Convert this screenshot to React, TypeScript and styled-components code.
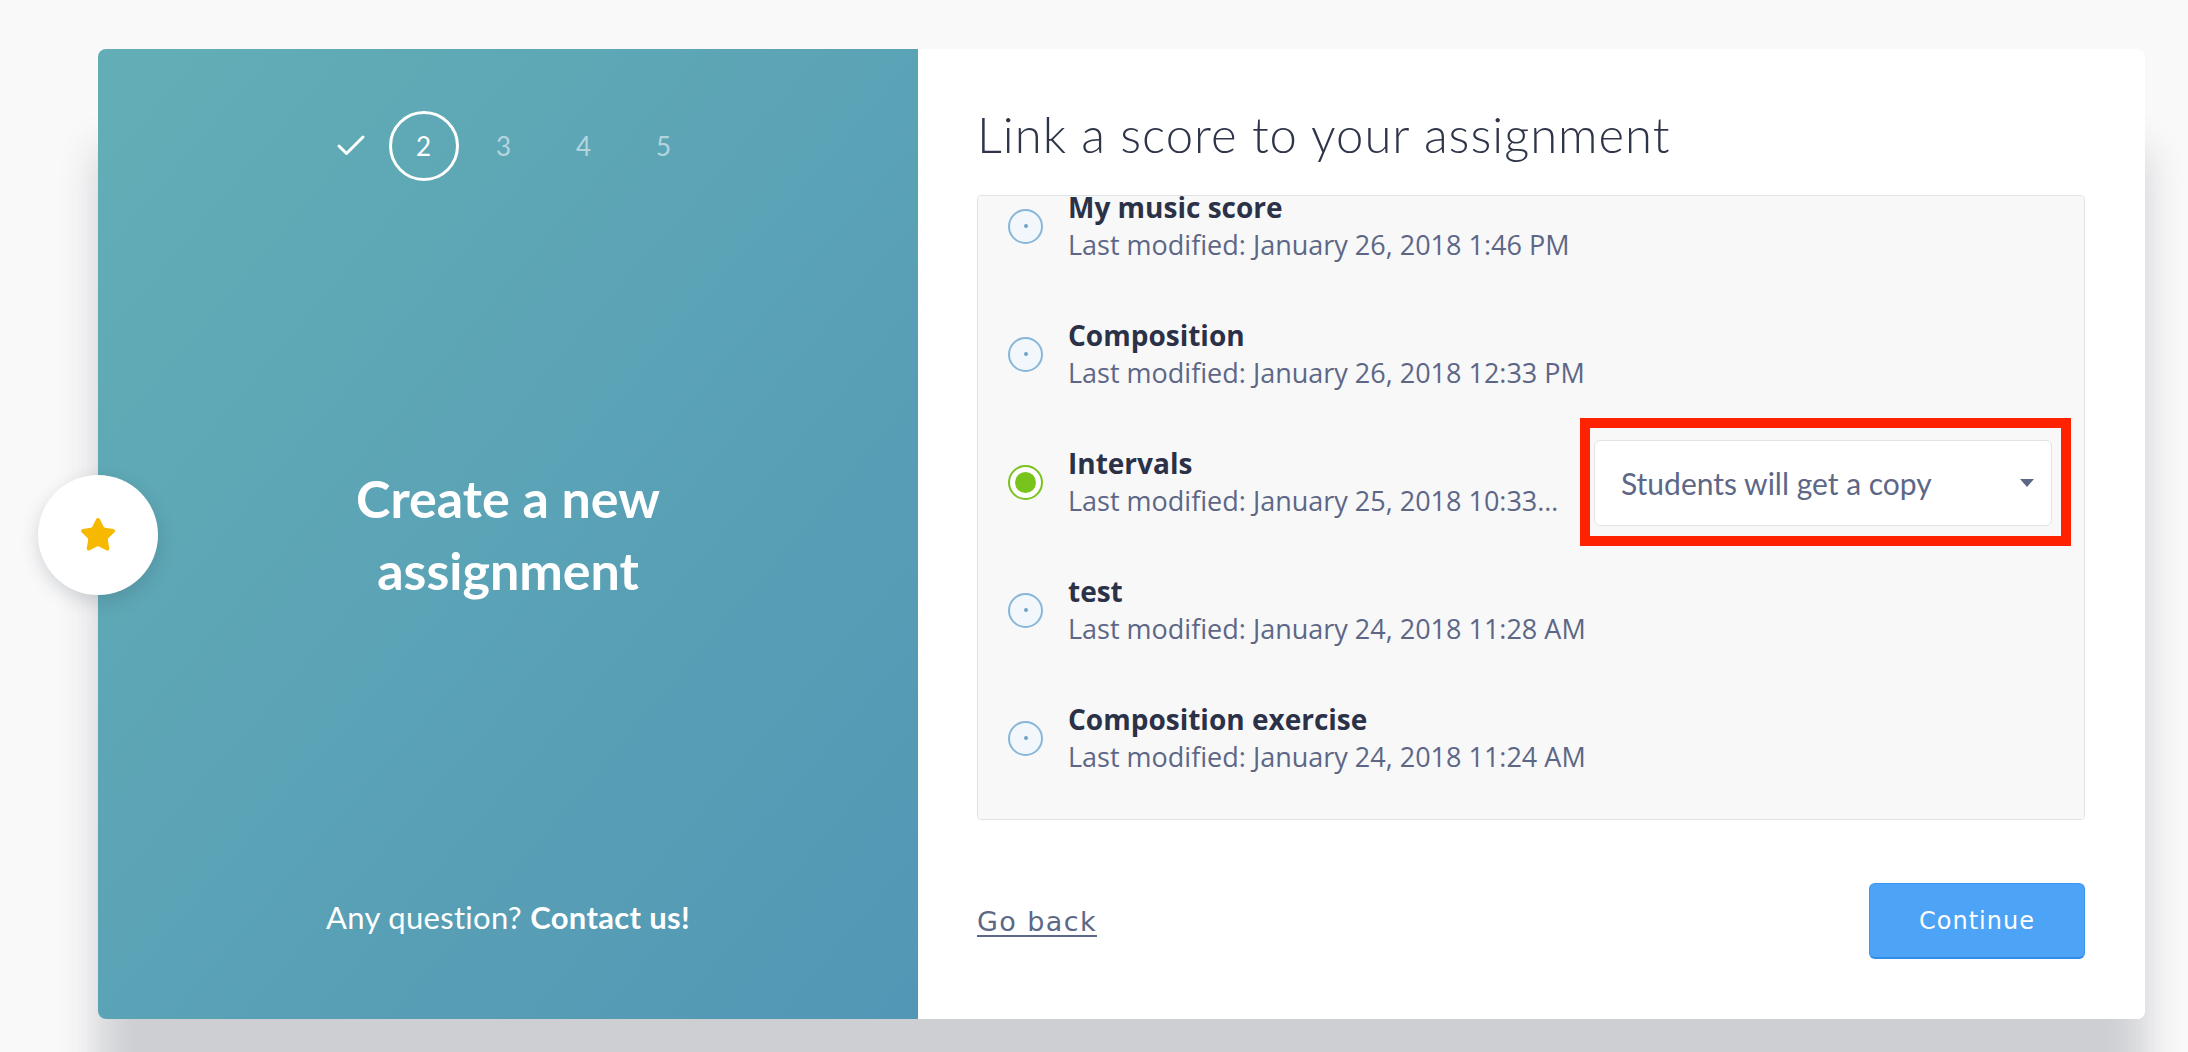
import React, { useLayoutEffect, useRef } from "react";
import styled, { createGlobalStyle } from "styled-components";
import { Star, Check } from "lucide-react";

const GlobalStyle = createGlobalStyle`
  html, body { margin: 0; padding: 0; background: #f9f9f9; }
  body { font-family: "Open Sans", sans-serif; -webkit-font-smoothing: antialiased; overflow: hidden; }
  * { box-sizing: border-box; }
`;

const Page = styled.div`
  width: 2188px;
  height: 1052px;
  padding: 49px 43px 0 98px;
  overflow: hidden;
`;

const Card = styled.div`
  position: relative;
  display: flex;
  width: 2047px;
  height: 970px;
  border-radius: 8px;
  box-shadow: 0 100px 40px rgba(35, 40, 62, 0.2);
`;

const Side = styled.aside`
  width: 820px;
  flex: none;
  border-radius: 8px 0 0 8px;
  background: linear-gradient(to bottom right, #63aeb6, #5297b5);
  display: grid;
  grid-template-rows: 1fr auto 1fr;
  justify-items: center;
  color: #fff;
  font-family: Lato, sans-serif;
`;

const Stepper = styled.div`
  align-self: start;
  margin-top: 62px;
  padding-left: 5px;
  display: flex;
  align-items: center;
  gap: 10px;
`;

const StepSlot = styled.div<{ $w: number; $active?: boolean; $muted?: boolean }>`
  width: ${(p) => p.$w}px;
  height: 70px;
  display: flex;
  align-items: center;
  justify-content: center;
  border-radius: 50%;
  border: ${(p) => (p.$active ? "3px solid #fff" : "none")};
  font-size: 26px;
  font-weight: 400;
  color: ${(p) => (p.$muted ? "rgba(255,255,255,0.55)" : "#fff")};
`;

const SideTitle = styled.h1`
  margin: 0;
  font-size: 52px;
  line-height: 72px;
  font-weight: 700;
  text-align: center;
  width: 380px;
`;

const SideFooter = styled.p`
  align-self: end;
  margin: 0 0 83px;
  font-size: 31px;
  letter-spacing: 0.3px;
  font-weight: 400;
  b {
    font-weight: 700;
  }
`;

const Badge = styled.div`
  position: absolute;
  left: -60px;
  top: 426px;
  width: 120px;
  height: 120px;
  border-radius: 50%;
  background: #fff;
  box-shadow: 0 6px 18px rgba(40, 50, 70, 0.18);
  display: flex;
  align-items: center;
  justify-content: center;
`;

const Main = styled.section`
  flex: 1;
  min-width: 0;
  background: #fff;
  border-radius: 0 8px 8px 0;
  padding: 56px 60px 60px 59px;
  display: flex;
  flex-direction: column;
`;

const Heading = styled.h2`
  margin: 0 0 32px;
  font-family: Lato, sans-serif;
  font-weight: 300;
  font-size: 49px;
  letter-spacing: 1px;
  line-height: 58px;
  color: #2f3549;
`;

const List = styled.div`
  height: 625px;
  flex: none;
  min-width: 0;
  border: 1px solid #e1e2e8;
  border-radius: 4px;
  background: #f8f8f9;
  overflow-y: auto;
  overflow-x: hidden;
  padding: 15px 0 17px;
  scrollbar-width: none;
  &::-webkit-scrollbar {
    display: none;
  }
`;

const Row = styled.div`
  height: 128px;
  display: flex;
  align-items: center;
  padding: 0 13px 0 30px;
`;

const Radio = styled.span<{ $on?: boolean }>`
  flex: none;
  width: 35px;
  height: 35px;
  border-radius: 50%;
  border: 2px solid ${(p) => (p.$on ? "#78c31c" : "#86b7da")};
  background: ${(p) => (p.$on ? "#fff" : "#f2f7fc")};
  display: flex;
  align-items: center;
  justify-content: center;
  &::after {
    content: "";
    width: ${(p) => (p.$on ? "21px" : "4px")};
    height: ${(p) => (p.$on ? "21px" : "4px")};
    border-radius: 50%;
    background: ${(p) => (p.$on ? "#78c31c" : "#6aa3cc")};
  }
`;

const Info = styled.div`
  flex: 1;
  min-width: 0;
  margin-left: 25px;
`;

const Name = styled.div`
  font-size: 28px;
  line-height: 38px;
  font-weight: 700;
  color: #2b3147;
  white-space: nowrap;
`;

const Modified = styled.div`
  font-size: 27px;
  line-height: 38px;
  font-weight: 400;
  color: #5d6785;
  white-space: nowrap;
  overflow: hidden;
  text-overflow: ellipsis;
`;

const Highlight = styled.div`
  flex: none;
  margin-left: 18px;
  border: 10px solid #ff2200;
  padding: 12px 9px 10px 4px;
`;

const Select = styled.div`
  width: 458px;
  height: 86px;
  border: 1px solid #e1e3e9;
  border-radius: 6px;
  background: #fff;
  display: flex;
  align-items: center;
  justify-content: space-between;
  padding: 0 17px 0 26px;
  font-family: Lato, sans-serif;
  font-size: 30px;
  color: #5d6786;
`;

const Actions = styled.div`
  margin-top: auto;
  display: flex;
  align-items: center;
  justify-content: space-between;
`;

const GoBack = styled.a`
  font-family: "DejaVu Sans", sans-serif;
  font-size: 27px;
  letter-spacing: 1.4px;
  color: #5d6786;
  text-decoration: underline;
  text-underline-offset: 4px;
  cursor: pointer;
`;

const Continue = styled.button`
  width: 216px;
  height: 76px;
  background: #4da3f6;
  border: 1px solid #3a96ef;
  border-bottom: 2px solid #2f8ce8;
  border-radius: 6px;
  color: #fff;
  font-family: "DejaVu Sans", sans-serif;
  font-size: 24px;
  letter-spacing: 1px;
  cursor: pointer;
`;

const scores = [
  { name: "My music score", date: "January 26, 2018 1:46 PM" },
  { name: "Composition", date: "January 26, 2018 12:33 PM" },
  { name: "Intervals", date: "January 25, 2018 10:33 AM", selected: true },
  { name: "test", date: "January 24, 2018 11:28 AM" },
  { name: "Composition exercise", date: "January 24, 2018 11:24 AM" },
];

export default function App() {
  const listRef = useRef<HTMLDivElement>(null);
  useLayoutEffect(() => {
    if (listRef.current) listRef.current.scrollTop = listRef.current.scrollHeight;
  }, []);

  return (
    <Page>
      <GlobalStyle />
      <Card>
        <Side>
          <Stepper>
            <StepSlot $w={56}>
              <Check size={36} strokeWidth={2} color="#fff" />
            </StepSlot>
            <StepSlot $w={70} $active>
              2
            </StepSlot>
            <StepSlot $w={70} $muted>
              3
            </StepSlot>
            <StepSlot $w={70} $muted>
              4
            </StepSlot>
            <StepSlot $w={70} $muted>
              5
            </StepSlot>
          </Stepper>
          <SideTitle>Create a new assignment</SideTitle>
          <SideFooter>
            Any question? <b>Contact us!</b>
          </SideFooter>
        </Side>
        <Main>
          <Heading>Link a score to your assignment</Heading>
          <List ref={listRef}>
            {scores.map((s) => (
              <Row key={s.name}>
                <Radio $on={s.selected} />
                <Info>
                  <Name>{s.name}</Name>
                  <Modified>Last modified: {s.date}</Modified>
                </Info>
                {s.selected && (
                  <Highlight>
                    <Select>
                      <span>Students will get a copy</span>
                      <svg width="14" height="8" viewBox="0 0 14 8">
                        <path d="M0 0h14L7 8z" fill="#5d6786" />
                      </svg>
                    </Select>
                  </Highlight>
                )}
              </Row>
            ))}
          </List>
          <Actions>
            <GoBack>Go back</GoBack>
            <Continue>Continue</Continue>
          </Actions>
        </Main>
        <Badge>
          <Star size={38} fill="#f6b900" color="#f6b900" strokeWidth={1.5} />
        </Badge>
      </Card>
    </Page>
  );
}
